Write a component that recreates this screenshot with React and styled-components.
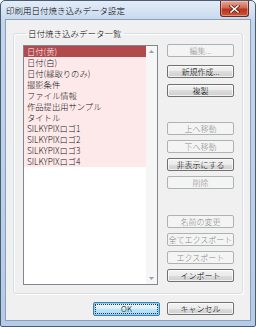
import React from 'react';
import styled, { createGlobalStyle } from 'styled-components';

const GlobalStyle = createGlobalStyle`
  html, body {
    margin: 0;
    padding: 0;
  }
  body {
    width: 256px;
    height: 327px;
    overflow: hidden;
    background: #ffffff;
    font-family: "Noto Sans CJK JP", "Noto Sans", sans-serif;
    font-weight: 300;
  }
`;

const items = [
  '日付(黄)',
  '日付(白)',
  '日付(縁取りのみ)',
  '撮影条件',
  'ファイル情報',
  '作品提出用サンプル',
  'タイトル',
  'SILKYPIXロゴ1',
  'SILKYPIXロゴ2',
  'SILKYPIXロゴ3',
  'SILKYPIXロゴ4',
];

const sideButtons = [
  { label: '編集...', disabled: true, space: -1 },
  { label: '新規作成...', space: 8 },
  { label: '複製', space: 6 },
  { label: '上へ移動', disabled: true, space: 25 },
  { label: '下へ移動', disabled: true, space: 5 },
  { label: '非表示にする', space: 5 },
  { label: '削除', disabled: true, space: 5 },
  { label: '名前の変更', disabled: true, space: 26 },
  { label: '全てエクスポート', disabled: true, space: 5 },
  { label: 'エクスポート', disabled: true, space: 5 },
  { label: 'インポート', space: 5 },
];

function App() {
  return (
    <>
      <GlobalStyle />
      <Window>
        <TitleBar>
          <Title>印刷用日付焼き込みデータ設定</Title>
          <CloseButton>
            <svg width="11" height="8" viewBox="0 0 11 8">
              <path d="M2 1 L9 7 M9 1 L2 7" stroke="#5a1a10" strokeWidth="3" strokeLinecap="square" />
              <path d="M2 1 L9 7 M9 1 L2 7" stroke="#ffffff" strokeWidth="1.6" strokeLinecap="square" />
            </svg>
          </CloseButton>
        </TitleBar>
        <Client>
          <Group>
            <Legend>日付焼き込みデータ一覧</Legend>
            <GroupBody>
              <ListBox>
                <Rows>
                  {items.map((item, index) => (
                    <Row key={item} $selected={index === 0}>
                      {item}
                    </Row>
                  ))}
                </Rows>
                <ScrollBar>
                  <Arrow>
                    <svg width="5" height="3" viewBox="0 0 5 3">
                      <path d="M0 3 L2.5 0 L5 3 Z" fill="#a0a0a0" />
                    </svg>
                  </Arrow>
                  <Arrow>
                    <svg width="5" height="3" viewBox="0 0 5 3">
                      <path d="M0 0 L5 0 L2.5 3 Z" fill="#a0a0a0" />
                    </svg>
                  </Arrow>
                </ScrollBar>
              </ListBox>
              <ButtonColumn>
                {sideButtons.map((b) => (
                  <Button key={b.label} disabled={b.disabled} $space={b.space}>
                    {b.label}
                  </Button>
                ))}
              </ButtonColumn>
            </GroupBody>
          </Group>
          <Footer>
            <DefaultButton>
              <Focus>OK</Focus>
            </DefaultButton>
            <Button>キャンセル</Button>
          </Footer>
        </Client>
      </Window>
    </>
  );
}

const Window = styled.div`
  box-sizing: border-box;
  width: 256px;
  height: 327px;
  display: flex;
  flex-direction: column;
  border: 1px solid #4b5b70;
  border-radius: 5px 5px 2px 2px;
  background: linear-gradient(#e4edf8, #c3d5ec 22px, #b5cbe6);
  padding: 0 4px 5px;
`;

const TitleBar = styled.div`
  height: 18px;
  display: flex;
  align-items: flex-start;
  justify-content: space-between;
`;

const Title = styled.div`
  font-size: 8.5px;
  line-height: 10px;
  color: #000;
  padding: 4px 0 0 1px;
  white-space: nowrap;
`;

const CloseButton = styled.div`
  box-sizing: border-box;
  width: 29px;
  height: 16px;
  margin-right: 2px;
  display: flex;
  align-items: center;
  justify-content: center;
  border: 1px solid #6b2a1f;
  border-top: none;
  border-radius: 0 0 3px 3px;
  background: linear-gradient(#e7a898, #d06a52 45%, #b8341b 55%, #c9583a);
  box-shadow: inset 0 0 0 1px rgba(255, 220, 210, 0.45);
`;

const Client = styled.div`
  flex: 1;
  display: flex;
  flex-direction: column;
  border: 1px solid #8aa0bc;
  background: #f0f0f0;
  padding: 8px 7px 4px;
`;

const Group = styled.fieldset`
  margin: 0;
  padding: 0 8px 8px 9px;
  height: 266px;
  box-sizing: border-box;
  border: 1px solid #d5dfe5;
  border-radius: 3px;
  box-shadow: inset 1px 1px 0 #ffffff, 1px 1px 0 #ffffff;
  min-width: 0;
`;

const Legend = styled.legend`
  font-size: 8.5px;
  line-height: 10px;
  padding: 0 2px;
  margin-left: 3px;
  color: #000;
`;

const GroupBody = styled.div`
  display: flex;
  gap: 9px;
  padding-top: 7px;
  height: 240px;
`;

const ListBox = styled.div`
  box-sizing: border-box;
  width: 135px;
  height: 240px;
  border: 1px solid #828790;
  background: #ffffff;
  display: flex;
`;

const Rows = styled.div`
  flex: 1;
  display: flex;
  flex-direction: column;
`;

const Row = styled.div`
  height: 11px;
  line-height: 11px;
  font-size: 8.3px;
  padding-left: 3px;
  white-space: nowrap;
  color: ${(p) => (p.$selected ? '#ffffff' : '#111111')};
  background: ${(p) => (p.$selected ? '#b14a4c' : '#fde9ea')};
`;

const ScrollBar = styled.div`
  width: 11px;
  background: #f6f6f6;
  display: flex;
  flex-direction: column;
  justify-content: space-between;
`;

const Arrow = styled.div`
  height: 11px;
  display: flex;
  align-items: center;
  justify-content: center;
`;

const ButtonColumn = styled.div`
  width: 67px;
  display: flex;
  flex-direction: column;
`;

const Button = styled.button`
  box-sizing: border-box;
  width: 67px;
  height: 13px;
  margin: ${(p) => p.$space || 0}px 0 0;
  padding: 0;
  font-family: inherit;
  font-weight: 300;
  font-size: 8px;
  line-height: 11px;
  color: #000;
  border: 1px solid #707070;
  border-radius: 2px;
  background: linear-gradient(#f3f3f3, #ebebeb 50%, #dddddd 50%, #cfcfcf);
  box-shadow: inset 0 0 0 1px rgba(255, 255, 255, 0.7);
  white-space: nowrap;

  &:disabled {
    color: #8a8a8a;
    border-color: #adb2b5;
    background: #f4f4f4;
    box-shadow: none;
  }
`;

const Footer = styled.div`
  display: flex;
  justify-content: flex-end;
  gap: 7px;
  margin-top: 8px;
  padding-right: 9px;
`;

const DefaultButton = styled(Button)`
  height: 14px;
  border-color: #3c7fb1;
  background: linear-gradient(#eaf6fd, #d9f0fc 50%, #bee6fd 50%, #a7d9f5);
  box-shadow: inset 0 0 0 1px #8fd1f5;
  padding: 1px;
  display: flex;
`;

const Focus = styled.span`
  flex: 1;
  border: 1px dotted #333;
  line-height: 8px;
`;

export default App;
